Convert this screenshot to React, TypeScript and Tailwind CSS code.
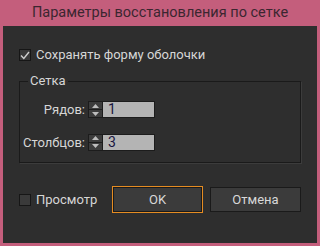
import React from "react";

function Spinner({ value }: { value: string }) {
  return (
    <div className="flex h-[17px]">
      <div className="flex flex-col w-[15px] h-[17px] border border-[#1c1c1c] bg-[#3c3c3c]">
        <div className="flex-1 flex items-center justify-center border-b border-[#1c1c1c]">
          <svg width="7" height="4" viewBox="0 0 7 4"><path d="M0 4 L3.5 0 L7 4 Z" fill="#bdbdbd" /></svg>
        </div>
        <div className="flex-1 flex items-center justify-center">
          <svg width="7" height="4" viewBox="0 0 7 4"><path d="M0 0 L3.5 4 L7 0 Z" fill="#bdbdbd" /></svg>
        </div>
      </div>
      <div className="w-[52px] h-[17px] bg-[#b4b4b4] border border-[#1c1c1c] border-l-0 pl-[5px] text-[14px] leading-[15px] text-[#1a1640]">
        {value}
      </div>
    </div>
  );
}

export default function App() {
  return (
    <div
      className="w-[320px] h-[246px] bg-[#c45e7c] flex flex-col px-[3px] pb-[3px]"
      style={{ fontFamily: 'Roboto, "Noto Sans", "DejaVu Sans", sans-serif' }}
    >
      <div className="h-[26px] flex items-center justify-center text-[14.5px] text-[#3b2630] pb-[1px]">
        Параметры восстановления по сетке
      </div>
      <div className="flex-1 bg-[#2e2e2e] flex flex-col text-[#d6d6d6] text-[13px]">
        <div className="flex items-center mt-[23px] ml-[16px] h-[12px]">
          <div className="w-[12px] h-[12px] border border-[#161616] bg-[#3a3a3a] flex items-center justify-center">
            <svg width="10" height="9" viewBox="0 0 10 9"><path d="M1 4.5 L3.8 7.5 L9 1" stroke="#cfcfcf" strokeWidth="1.4" fill="none" /></svg>
          </div>
          <span className="ml-[5px] leading-[12px]">Сохранять форму оболочки</span>
        </div>
        <div className="relative mt-[20px] ml-[16px] w-[282px] h-[82px] border border-[#1a1a1a] shadow-[1px_1px_0_#3c3c3c]">
          <span className="absolute left-[8px] top-[-9px] bg-[#2e2e2e] px-[2px] leading-[16px]">Сетка</span>
          <div className="flex flex-col gap-[13px] mt-[18px]">
            <div className="flex items-center">
              <span className="w-[68px] text-right pr-[3px]">Рядов:</span>
              <Spinner value="1" />
            </div>
            <div className="flex items-center">
              <span className="w-[68px] text-right pr-[3px]">Столбцов:</span>
              <Spinner value="3" />
            </div>
          </div>
        </div>
        <div className="flex items-center mt-[23px] ml-[16px]">
          <div className="w-[12px] h-[12px] border border-[#161616] bg-[#3a3a3a]" />
          <span className="ml-[5px] w-[76px]">Просмотр</span>
          <button className="w-[91px] h-[27px] border border-[#e58c22] bg-[#3b3b3b] shadow-[inset_0_0_0_1px_#1a1a1a] text-[#d8d8d8] text-[13px]">
            OK
          </button>
          <button className="ml-[7px] w-[91px] h-[25px] border border-[#1a1a1a] bg-[#3b3b3b] text-[#d8d8d8] text-[13px]">
            Отмена
          </button>
        </div>
      </div>
    </div>
  );
}
